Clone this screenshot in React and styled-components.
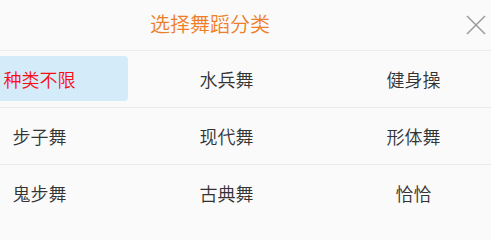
import React, { useState } from 'react'
import styled, { createGlobalStyle } from 'styled-components'

// #region --- css -----
const GlobalStyle = createGlobalStyle`
  html, body {
    margin: 0;
    padding: 0;
    background: #fafafa;
    overflow: hidden;
    font-family: "Noto Sans CJK SC", "Noto Sans", sans-serif;
  }
`

const Panel = styled.div`
  width: 491px;
  height: 209px;
  background: #fafafa;
  overflow: hidden;
`

const Header = styled.div`
  display: flex;
  align-items: center;
  height: 50px;
  border-bottom: 1px solid #ececec;
`

const Title = styled.div`
  flex: 1;
  text-align: center;
  color: #ee7e28;
  font-size: 20px;
  font-weight: 350;
  line-height: 1;
  padding-bottom: 2px;
`

const CloseBtn = styled.div`
  width: 71px;
  display: flex;
  justify-content: flex-end;
  padding-right: 4px;
  box-sizing: border-box;
  cursor: pointer;
`

const Grid = styled.div`
  margin-left: -54px;
  width: 561px;
`

const Row = styled.div`
  display: grid;
  grid-template-columns: repeat(3, 187px);
  height: 56px;
  border-bottom: 1px solid #ececec;
`

const Cell = styled.div`
  margin: 5px 5px 6px 5px;
  display: flex;
  align-items: center;
  justify-content: center;
  border-radius: 4px;
  font-size: 18px;
  font-weight: 350;
  color: ${p => (p.$active ? '#fa0d12' : '#333')};
  background: ${p => (p.$active ? '#d4ebfa' : 'transparent')};
  cursor: pointer;
`
// #endregion --- css ----

const CloseIcon = () => (
  <svg width="22" height="22" viewBox="0 0 22 22">
    <path d="M2 2 L20 20 M20 2 L2 20" stroke="#9a9a9a" strokeWidth="1.5" fill="none" />
  </svg>
)

const rows = [
  ['种类不限', '水兵舞', '健身操'],
  ['步子舞', '现代舞', '形体舞'],
  ['鬼步舞', '古典舞', '恰恰'],
]

const App = () => {
  const [selected, setSelected] = useState('种类不限')

  return (
    <Panel>
      <GlobalStyle />
      <Header>
        <Title>选择舞蹈分类</Title>
        <CloseBtn><CloseIcon /></CloseBtn>
      </Header>
      <Grid>
        {rows.map((row, i) => (
          <Row key={i}>
            {row.map(name => (
              <Cell key={name} $active={selected === name} onClick={() => setSelected(name)}>
                {name}
              </Cell>
            ))}
          </Row>
        ))}
      </Grid>
    </Panel>
  )
}

export default App
